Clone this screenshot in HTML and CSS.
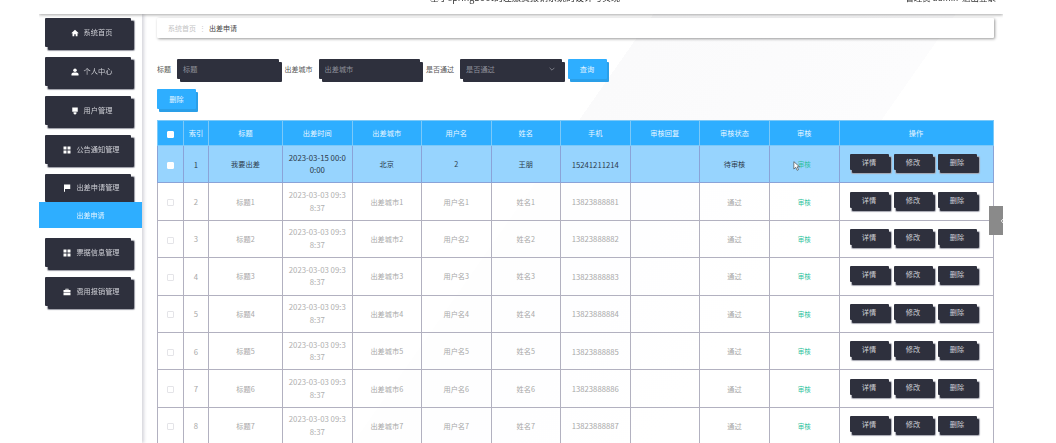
FILE: index.html
```html
<!DOCTYPE html>
<html lang="en">
<head>
    <meta charset="UTF-8">
    <meta name="viewport" content="width=device-width, initial-scale=1.0">
    <title>出差申请</title>
    <link rel="stylesheet" href="styles.css">
</head>
<body>
    <div class="app">
        <header class="topbar">
            <div class="topbar-title">基于springboot的差旅费报销系统的设计与实现</div>
            <div class="topbar-user">管理员 admin&nbsp; 退出登录</div>
        </header>

        <div class="layout">
            <aside class="sidebar">
                <a class="menu-item">
                    <svg class="menu-icon" viewBox="0 0 16 16"><path d="M8 1.500 0.500 8.500H3v6h3.600v-4h2.800v4H13v-6h2.500z"/></svg>
                    系统首页
                </a>
                <a class="menu-item">
                    <svg class="menu-icon" viewBox="0 0 16 16"><circle cx="8" cy="4.500" r="3.500"/><path d="M1 15v-2.500C1 10.500 3 9 5 9h6c2 0 4 1.500 4 3.500V15z"/></svg>
                    个人中心
                </a>
                <a class="menu-item">
                    <svg class="menu-icon" viewBox="0 0 16 16"><path d="M2.500 1h11v8.500h-11zM5 10.500h6V13l-3 2.500L5 13z"/></svg>
                    用户管理
                </a>
                <a class="menu-item">
                    <svg class="menu-icon" viewBox="0 0 16 16"><path d="M1 1h6v6H1zM9 1h6v6H9zM1 9h6v6H1zM9 9h6v6H9z"/></svg>
                    公告通知管理
                </a>
                <a class="menu-item menu-open">
                    <svg class="menu-icon" viewBox="0 0 16 16"><path d="M2 1h12.500v9H4v5.500H2z"/></svg>
                    出差申请管理
                </a>
                <a class="submenu-item">出差申请</a>
                <a class="menu-item">
                    <svg class="menu-icon" viewBox="0 0 16 16"><path d="M1 1h6v6H1zM9 1h6v6H9zM1 9h6v6H1zM9 9h6v6H9z"/></svg>
                    票据信息管理
                </a>
                <a class="menu-item">
                    <svg class="menu-icon" viewBox="0 0 16 16"><path d="M5 4V1.500h6V4h4v4H1V4zM6.500 4h3V3h-3zM1 9h14v5.500H1z"/></svg>
                    费用报销管理
                </a>
            </aside>

            <main class="content">
                <div class="breadcrumb">
                    <span class="crumb-link">系统首页</span>
                    <span class="crumb-sep">⋮</span>
                    <span class="crumb-current">出差申请</span>
                </div>

                <div class="search-row">
                    <label class="search-label">标题</label>
                    <div class="dark-input">标题</div>
                    <label class="search-label">出差城市</label>
                    <div class="dark-input">出差城市</div>
                    <label class="search-label">是否通过</label>
                    <div class="dark-input input-select">
                        是否通过
                        <svg class="select-arrow" viewBox="0 0 10 6"><path d="M1 1l4 4 4-4"/></svg>
                    </div>
                    <button class="btn btn-blue btn-search">查询</button>
                </div>

                <div class="action-row">
                    <button class="btn btn-blue btn-delete">删除</button>
                </div>

                <table class="data-table">
                    <colgroup>
                        <col class="c-check"><col class="c-index"><col class="c-title"><col class="c-mid">
                        <col class="c-mid"><col class="c-mid"><col class="c-mid"><col class="c-mid">
                        <col class="c-mid"><col class="c-state"><col class="c-mid"><col class="c-ops">
                    </colgroup>
                    <thead>
                        <tr>
                            <th><span class="check check-on"></span></th>
                            <th>索引</th><th>标题</th><th>出差时间</th><th>出差城市</th><th>用户名</th>
                            <th>姓名</th><th>手机</th><th>审核回复</th><th>审核状态</th><th>审核</th><th>操作</th>
                        </tr>
                    </thead>
                    <tbody id="rows"></tbody>
                </table>

                <div class="side-handle">
                    <svg viewBox="0 0 10 16"><path d="M8 2 2 8l6 6"/></svg>
                </div>
            </main>
        </div>
    </div>

    <script>
        const rows = [
            { title: '我要出差', time: '2023-03-15 00:00:00', city: '北京', user: '2', name: '王朋', phone: '15241211214', state: '待审核', hover: true }
        ];
        for (let i = 1; i <= 8; i++) {
            rows.push({
                title: '标题' + i,
                time: '2023-03-03 09:38:37',
                city: '出差城市' + i,
                user: '用户名' + i,
                name: '姓名' + i,
                phone: '1382388888' + i,
                state: '通过'
            });
        }

        const body = document.getElementById('rows');
        rows.forEach((r, i) => {
            const row = document.createElement('tr');
            if (r.hover) row.className = 'row-hover';
            row.innerHTML = `
                <td><span class="check"></span></td>
                <td class="cell-num">${i + 1}</td>
                <td>${r.title}</td>
                <td class="cell-time">${r.time}</td>
                <td>${r.city}</td>
                <td>${r.user}</td>
                <td>${r.name}</td>
                <td class="cell-num">${r.phone}</td>
                <td></td>
                <td>${r.state}</td>
                <td class="cell-audit">审核</td>
                <td class="cell-ops">
                    <button class="btn btn-dark">详情</button>
                    <button class="btn btn-dark">修改</button>
                    <button class="btn btn-dark">删除</button>
                </td>
            `;
            if (r.hover) {
                row.querySelector('.cell-audit').innerHTML = '<svg class="cursor" viewBox="0 0 10 15"><path d="M1 1v11l3-2.500 2 4.500 2-1-2-4.300h3.500z"/></svg>审核';
            }
            body.appendChild(row);
        });
    </script>
</body>
</html>
```

FILE: styles.css
```css
* {
    box-sizing: border-box;
}
html, body {
    height: 100%;
}
body {
    margin: 0;
    padding: 0 53px 0 39px;
    overflow: hidden;
    background-color: #fff;
    font-family: "Noto Sans CJK SC", "Noto Sans", "Open Sans", sans-serif;
    font-size: 7px;
    color: #999;
}
.app {
    height: 443px;
    overflow: hidden;
    filter: blur(0.4px);
}

/* top bar, the page is scrolled so only the bottom of it shows */
.topbar {
    position: relative;
    z-index: 2;
    height: 14px;
    display: flex;
    justify-content: center;
    align-items: flex-end;
    padding-bottom: 11px;
    background: #fff;
    box-shadow: 0 1px 3px rgba(0, 0, 0, 0.35);
    color: #333;
    line-height: 11px;
}
.topbar-title {
    font-size: 9px;
    margin-left: 8px;
}
.topbar-user {
    position: absolute;
    right: 7px;
    bottom: 11px;
    font-size: 8.5px;
}

.layout {
    display: flex;
    height: 429px;
}

.sidebar {
    width: 103px;
    flex: none;
    padding-top: 4px;
    background: #fff;
    box-shadow: 2px 0 3px rgba(120, 120, 140, 0.3);
    position: relative;
    z-index: 1;
}
.menu-item {
    display: flex;
    align-items: center;
    justify-content: center;
    gap: 5px;
    width: 86px;
    height: 29px;
    margin: 0 0 10px 6px;
    padding-left: 7px;
    background: #2e303d;
    box-shadow: 3px 3px 0 #2e303d, 3px 3px 1px 1px #9a9ba5;
    border-radius: 1px;
    color: #cfd0d6;
    font-size: 7.2px;
    line-height: 1;
}
.menu-open {
    margin-bottom: 0;
    height: 28px;
}
.menu-icon {
    width: 8px;
    height: 8px;
    flex: none;
    fill: #fff;
}
.submenu-item {
    display: block;
    height: 26px;
    margin: 0 0 10px;
    background: #2eaeff;
    color: #e6f5ff;
    font-size: 7px;
    line-height: 26px;
    text-align: center;
}

.content {
    position: relative;
    flex: 1;
    padding: 4px 10px 0 15px;
    background:
        linear-gradient(125deg, transparent 44%, #fafafb 44%, #fcfcfd 70%, #fff 70%),
        #fff;
}
.breadcrumb {
    display: flex;
    align-items: center;
    height: 20px;
    padding-left: 11px;
    background: #fff;
    box-shadow: 1px 1px 3px rgba(0, 0, 0, 0.4);
    border-radius: 1px;
}
.crumb-link {
    color: #c4c4c4;
}
.crumb-sep {
    margin: 0 3px;
    color: #ccc;
}
.crumb-current {
    color: #444;
}

.search-row {
    display: flex;
    align-items: center;
    gap: 6px;
    height: 21px;
    margin-top: 20px;
    color: #555;
}
.search-label {
    font-size: 7px;
    white-space: nowrap;
}
.dark-input {
    display: flex;
    align-items: center;
    width: 101.5px;
    height: 20px;
    padding-left: 6px;
    background: #2e303d;
    box-shadow: 3px 3px 0 #2e303d;
    border-radius: 1px;
    color: #8f909a;
    font-size: 7.2px;
}
.input-select {
    justify-content: space-between;
    padding-right: 7px;
}
.select-arrow {
    width: 6px;
    height: 4px;
    fill: none;
    stroke: #9a9ba5;
    stroke-width: 1.2;
}

.btn {
    border: none;
    padding: 0;
    font-family: inherit;
    cursor: pointer;
    border-radius: 1px;
}
.btn-blue {
    height: 20px;
    background: #2eaeff;
    box-shadow: 2px 3px 0 #2a9fe8;
    color: #e6f5ff;
    font-size: 7.2px;
}
.btn-search {
    width: 39px;
}
.action-row {
    margin-top: 10px;
    height: 31px;
}
.btn-delete {
    width: 39px;
}

.data-table {
    width: 836px;
    border-collapse: collapse;
    table-layout: fixed;
}
.c-check { width: 26px; }
.c-index { width: 25px; }
.c-title { width: 74px; }
.c-mid { width: 69.5px; }
.c-state { width: 70px; }
.c-ops { width: 154px; }

.data-table th, .data-table td {
    padding: 0 2px;
    border: 1px solid #b2b1c0;
    text-align: center;
    font-weight: normal;
    font-size: 7.2px;
}
.data-table th {
    height: 25px;
    background: #2eaeff;
    border-color: #7cc9f8;
    color: #e8f6ff;
}
.data-table td {
    height: 37.4px;
    background: rgba(255, 255, 255, 0.8);
    color: #a8a8a8;
}
.data-table td.cell-time {
    padding: 0 5.5px;
    font-size: 7.8px;
    line-height: 12.5px;
    word-break: break-all;
    color: #b0b0b0;
}
.data-table td.cell-num {
    font-size: 7.7px;
}
.data-table .row-hover td {
    background: #97d4fe;
    border-color: #8aa3d8;
    color: #2c3a4a;
}
.data-table td.cell-audit, .data-table .row-hover td.cell-audit {
    position: relative;
    color: #2dbf9c;
    font-size: 6.5px;
}
.cursor {
    position: absolute;
    left: 23px;
    top: 15px;
    width: 7px;
    height: 10px;
    fill: #fff;
    stroke: #444;
    stroke-width: 1;
}
.data-table td.cell-ops {
    padding: 0 0 4px 10px;
    text-align: left;
    font-size: 0;
}
.btn-dark {
    width: 39px;
    height: 16px;
    margin-right: 5px;
    background: #2e303d;
    box-shadow: 2px 3px 0 #2e303d, 2px 3px 1px 1px #a5a6b0;
    color: #cfd0d6;
    font-size: 7.2px;
    vertical-align: middle;
}

.check {
    display: inline-block;
    width: 7px;
    height: 7px;
    vertical-align: middle;
    background: #fff;
    border: 1px solid #e4e4e8;
    border-radius: 1px;
}
.check-on, .row-hover .check {
    border-color: #fff;
}

.side-handle {
    position: absolute;
    right: 0;
    top: 192px;
    width: 15px;
    height: 29px;
    display: flex;
    align-items: center;
    padding-left: 11px;
    background: #8a8a8a;
    z-index: 3;
}
.side-handle svg {
    width: 6px;
    height: 10px;
    flex: none;
    fill: none;
    stroke: #fff;
    stroke-width: 1.5;
}
```
